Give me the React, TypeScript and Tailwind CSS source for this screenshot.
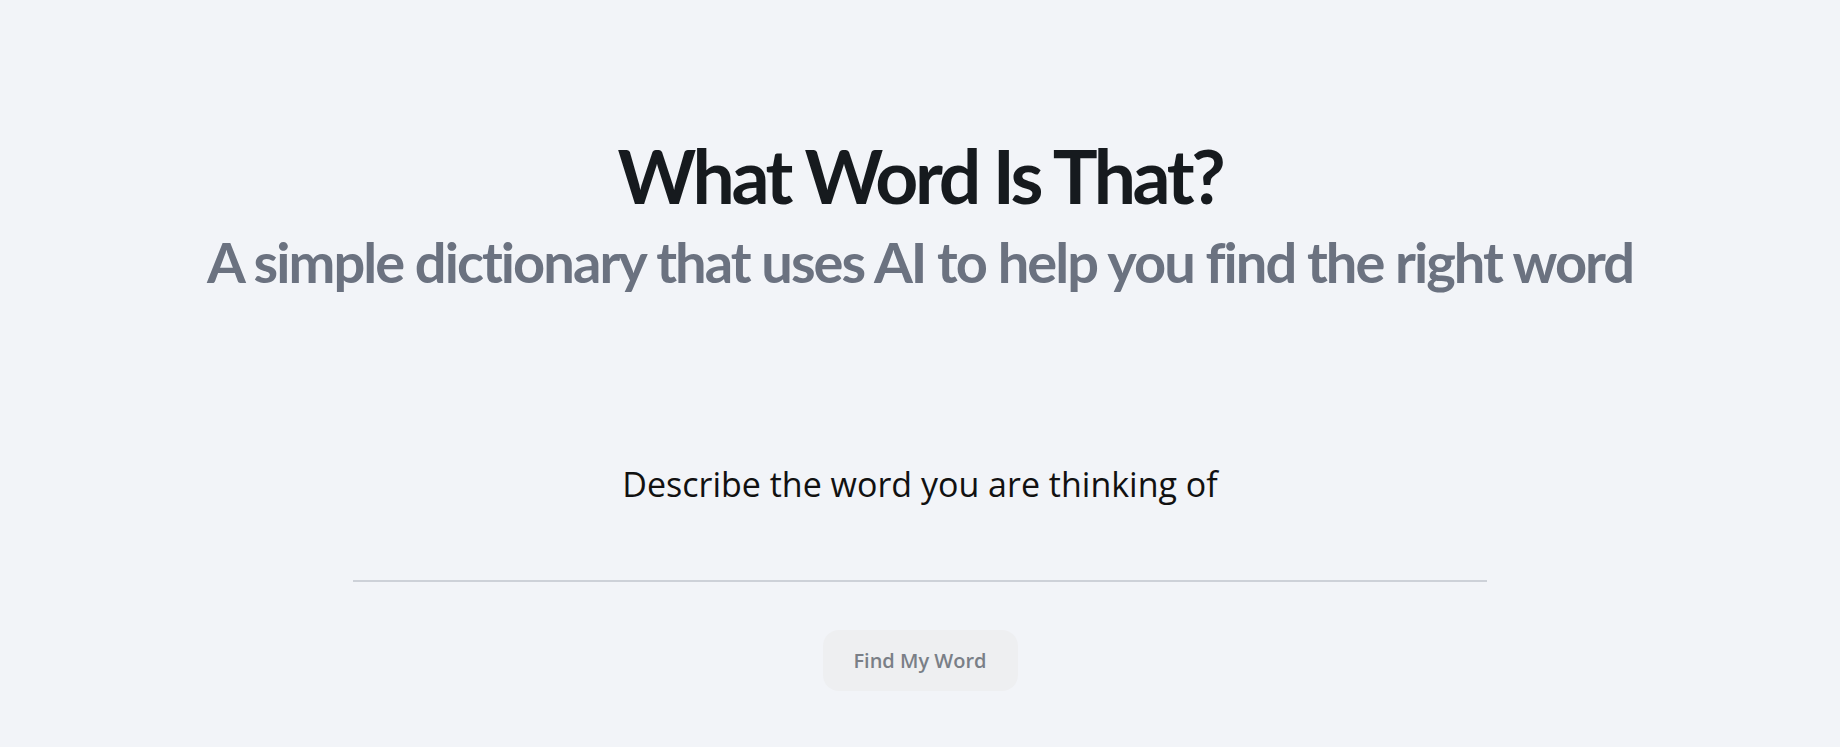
import { useState } from "react";
import type { JSX } from "react/jsx-runtime";

function App(): JSX.Element {
    const [description, setDescription] = useState("");

    return (
        <div className="min-h-screen w-full bg-[#f2f4f8] flex flex-col items-center font-['Open_Sans',sans-serif]">
            {/* Header */}
            <header className="flex flex-col items-center pt-[138px] font-['Lato',sans-serif]">
                <h1 className="text-[75px] leading-none font-bold tracking-[-0.045em] text-[#161a1e]">
                    What Word Is That?
                </h1>
                <h2 className="mt-[21px] text-[56px] leading-none font-bold tracking-[-0.035em] text-[#6b7280]">
                    A simple dictionary that uses AI to help you find the right word
                </h2>
            </header>

            {/* Search form */}
            <form className="flex flex-col items-center mt-[177px] w-full" onSubmit={(e) => e.preventDefault()}>
                <label htmlFor="description" className="text-[34px] leading-none text-[#111]">
                    Describe the word you are thinking of
                </label>
                <input
                    id="description"
                    type="text"
                    value={description}
                    onChange={(e) => setDescription(e.target.value)}
                    className="mt-[41px] w-[1134px] h-[40px] bg-transparent border-b-2 border-[#cdd1d8] focus:outline-none text-2xl"
                />
                <button
                    type="submit"
                    className="mt-[48px] w-[195px] h-[61px] rounded-2xl bg-[#eeeff1] text-[20px] font-semibold text-[#7a7f87]"
                >
                    Find My Word
                </button>
            </form>
        </div>
    );
}

export default App;
